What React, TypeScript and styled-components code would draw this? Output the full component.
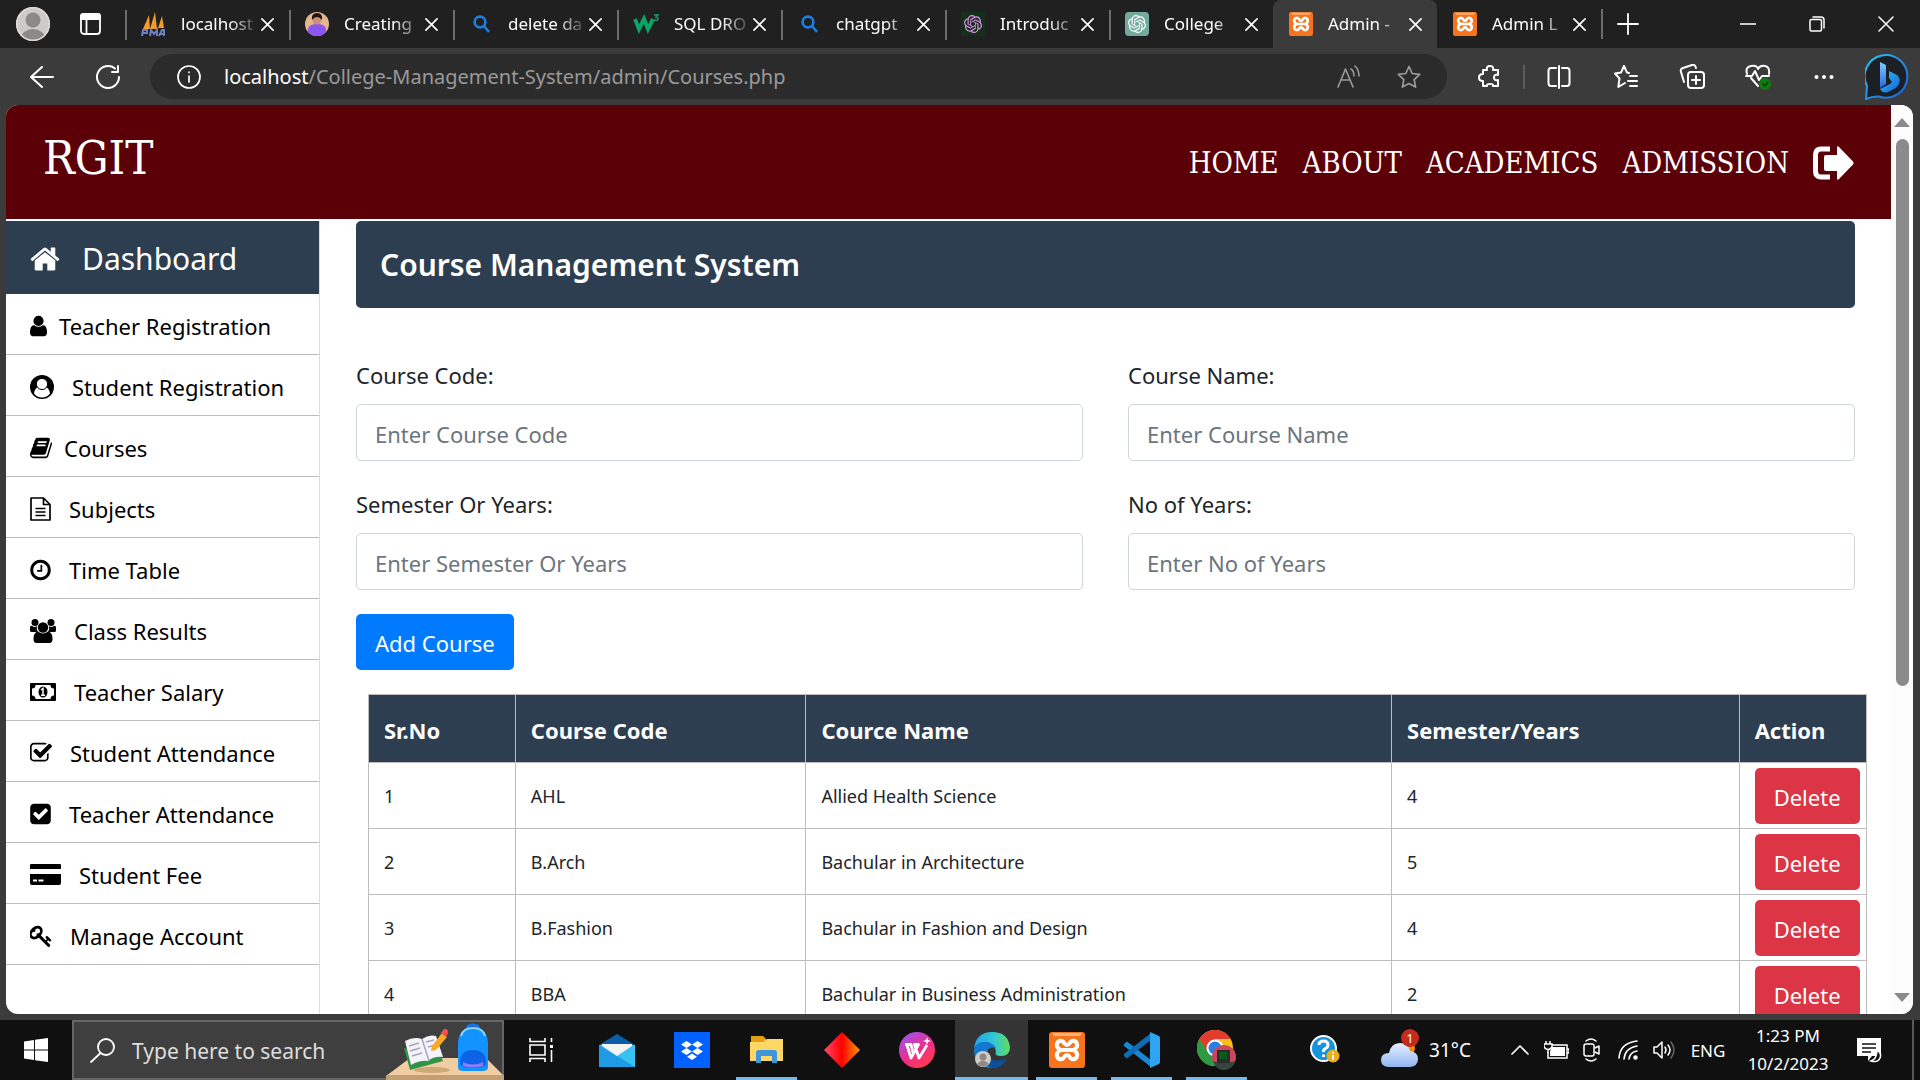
import React from "react";
import styled, { createGlobalStyle, css } from "styled-components";

const SANS = '"Noto Sans", "Open Sans", sans-serif';
const SERIF = '"DejaVu Serif Condensed", "Liberation Serif", serif';
const NAVY = "#2c3e50";

const GlobalStyle = createGlobalStyle`
  *, *::before, *::after { box-sizing: border-box; }
  body { margin: 0; font-family: ${SANS}; background: #3b3b3b; }
  button, input { font-family: inherit; margin: 0; }
  svg { display: block; flex: none; }
`;

const Desktop = styled.div`
  display: flex;
  flex-direction: column;
  height: 100vh;
  overflow: hidden;
  background: #3b3b3b;
`;

const plainButton = css`
  display: flex;
  align-items: center;
  justify-content: center;
  padding: 0;
  border: 0;
  background: none;
  color: #fff;
`;

/* ---------- browser tabs ---------- */

const TabStrip = styled.header`
  display: flex;
  align-items: center;
  height: 48px;
  flex: none;
  background: #202020;
`;

const ProfileArea = styled.div`
  display: flex;
  align-items: center;
  gap: 30px;
  width: 125px;
  padding-left: 16px;
  flex: none;
`;

const IconButton = styled.button<{ $w?: number; $tone?: string }>`
  ${plainButton}
  width: ${(p) => (p.$w ? p.$w + "px" : "auto")};
  flex: none;
  color: ${(p) => p.$tone || "#fff"};
`;

const TabItem = styled.div<{ $active?: boolean; $line?: boolean }>`
  display: flex;
  align-items: center;
  flex: 0 1 164px;
  min-width: 0;
  height: 48px;
  padding: 0 15px 0 16px;
  border-radius: ${(p) => (p.$active ? "8px 8px 0 0" : "0")};
  background: ${(p) =>
    p.$active
      ? "#3b3b3b"
      : p.$line
      ? "linear-gradient(#6b6b6b, #6b6b6b) 0 10px / 2px 30px no-repeat"
      : "none"};
`;

const TabTitle = styled.span`
  flex: 1;
  min-width: 0;
  margin-left: 15px;
  overflow: hidden;
  white-space: nowrap;
  color: #fff;
  font-size: 17px;
  line-height: 24px;
  mask-image: linear-gradient(90deg, #000 60%, transparent 100%);
`;

const NewTab = styled.div`
  display: flex;
  align-items: center;
  height: 30px;
  padding-left: 14px;
  border-left: 2px solid #6b6b6b;
`;

const WindowButtons = styled.div`
  display: flex;
  margin-left: auto;
`;

/* ---------- address bar ---------- */

const Toolbar = styled.div`
  display: flex;
  align-items: center;
  height: 57px;
  flex: none;
  padding: 0 3px 0 9px;
`;

const AddressBox = styled.div`
  display: flex;
  align-items: center;
  flex: 1;
  min-width: 0;
  height: 45px;
  margin: 0 10px 0 9px;
  padding: 0 8px 0 27px;
  border-radius: 23px;
  background: #2b2b2b;
`;

const Address = styled.button`
  ${plainButton}
  flex: 1;
  min-width: 0;
  justify-content: flex-start;
  margin-left: 23px;
  overflow: hidden;
  white-space: nowrap;
  font-size: 20px;
  line-height: 30px;
  color: #9a9a9a;
`;

const Host = styled.span`
  color: #fff;
`;

const BarLine = styled.span`
  width: 2px;
  height: 24px;
  background: #5c5c5c;
`;

/* ---------- page ---------- */

const Viewport = styled.div`
  display: flex;
  flex: 1;
  min-height: 0;
  margin: 0 7px 6px 6px;
  border-radius: 12px;
  overflow: hidden;
  background: #fff;
`;

const Page = styled.div`
  display: flex;
  flex-direction: column;
  flex: 1;
  min-width: 0;
  overflow: hidden;
`;

const Scrollbar = styled.div`
  display: flex;
  flex-direction: column;
  align-items: center;
  width: 22px;
  padding: 13px 0 12px;
  background: #fcfcfc;
`;

const ScrollTrack = styled.div`
  flex: 1;
  width: 13px;
  margin: 12px 0;
`;

const ScrollThumb = styled.div`
  height: 65%;
  border-radius: 7px;
  background: #8b8b8b;
`;

const SiteHeader = styled.header`
  display: flex;
  justify-content: space-between;
  height: 114px;
  flex: none;
  margin-bottom: 2px;
  padding: 0 37px;
  background: #5c0008;
  color: #fff;
  font-family: ${SERIF};
`;

const Brand = styled.a`
  margin-top: 23px;
  font-size: 47px;
  line-height: 60px;
  color: #fff;
  text-decoration: none;
`;

const SiteNav = styled.nav`
  display: flex;
  align-items: center;
  align-self: flex-start;
  gap: 24px;
  height: 116px;
`;

const NavLink = styled.a`
  font-size: 29px;
  line-height: 40px;
  color: #fff;
  text-decoration: none;
`;

const Columns = styled.div`
  display: flex;
  flex: 1;
  min-height: 0;
`;

const Sidebar = styled.nav`
  width: 314px;
  flex: none;
  border-right: 1px solid #dcdcdc;
`;

const SideTitle = styled.a`
  display: flex;
  align-items: center;
  gap: 22px;
  height: 73px;
  padding: 2px 0 0 24px;
  background: ${NAVY};
  color: #fff;
  font-size: 30px;
  line-height: 40px;
  text-decoration: none;
`;

const SideLink = styled.a<{ $tight?: boolean }>`
  display: flex;
  align-items: center;
  gap: ${(p) => (p.$tight ? 12 : 18)}px;
  height: 61px;
  padding: 3px 0 0 24px;
  border-bottom: 1px solid #bdbdbd;
  color: #000;
  font-size: 22px;
  line-height: 32px;
  text-decoration: none;
  white-space: nowrap;
`;

const Content = styled.main`
  flex: 1;
  min-width: 0;
  padding: 0 36px;
  color: #212529;
`;

const Banner = styled.h1`
  margin: 0 0 51px;
  padding: 22px 24px 21px;
  border-radius: 5px;
  background: ${NAVY};
  color: #fff;
  font-size: 30px;
  font-weight: 600;
  line-height: 44px;
`;

const FieldGrid = styled.div`
  display: grid;
  grid-template-columns: 1fr 1fr;
  gap: 27px 45px;
  margin-bottom: 24px;
`;

const Field = styled.div`
  display: flex;
  flex-direction: column;
`;

const Label = styled.label`
  margin-bottom: 13px;
  font-size: 22px;
  line-height: 32px;
`;

const TextBox = styled.input`
  width: 100%;
  height: 57px;
  padding: 3px 18px 0;
  border: 1px solid #ced4da;
  border-radius: 5px;
  background: #fff;
  color: #495057;
  font-size: 22px;
  &::placeholder { color: #6c757d; opacity: 1; }
`;

const ActionButton = styled.button<{ $danger?: boolean }>`
  display: block;
  height: 56px;
  padding: 2px 19px 0;
  border: 0;
  border-radius: 5px;
  background: ${(p) => (p.$danger ? "#dc3545" : "#007bff")};
  color: #fff;
  font-size: 22px;
  line-height: 32px;
  white-space: nowrap;
`;

const CourseTable = styled.table`
  width: 100%;
  margin: 24px 0 0 12px;
  border-collapse: collapse;
  table-layout: fixed;
`;

const HeadCell = styled.th<{ $w: string }>`
  width: ${(p) => p.$w};
  height: 68px;
  padding: 2px 15px 0;
  border: 1px solid #bdbdbd;
  background: ${NAVY};
  color: #fff;
  font-size: 22px;
  font-weight: 700;
  line-height: 32px;
  text-align: left;
`;

const Cell = styled.td`
  height: 66px;
  padding: 0 0 0 15px;
  border: 1px solid #bdbdbd;
  font-size: 18px;
  line-height: 28px;
`;

/* ---------- taskbar ---------- */

const Taskbar = styled.footer`
  display: flex;
  align-items: stretch;
  height: 60px;
  flex: none;
  background: #101010;
  color: #fff;
`;

const SearchBox = styled.label`
  position: relative;
  display: flex;
  align-items: center;
  gap: 17px;
  width: 432px;
  flex: none;
  padding-left: 16px;
  border: 2px solid #666;
  background: #3f3f3f;
`;

const SearchInput = styled.input`
  width: 240px;
  padding: 2px 0 0;
  border: 0;
  background: none;
  color: #fff;
  font-size: 21px;
  line-height: 30px;
  &::placeholder { color: #dedede; opacity: 1; }
`;

const SearchArt = styled.svg`
  position: absolute;
  right: -2px;
  bottom: -2px;
`;

const TaskButton = styled.button<{ $open?: boolean; $active?: boolean }>`
  ${plainButton}
  width: ${(p) => (p.$active ? 73 : 61)}px;
  margin: 0 ${(p) => (p.$active ? 1 : 7)}px;
  flex: none;
  border-top: 3px solid transparent;
  border-bottom: 3px solid ${(p) => (p.$open || p.$active ? "#76b9ed" : "transparent")};
  background: ${(p) => (p.$active ? "#343434" : "none")};
`;

const Tray = styled.div`
  display: flex;
  align-items: center;
  margin-left: auto;
  padding-right: 6px;
  font-size: 17px;
  line-height: 28px;
`;

const TrayItem = styled.button<{ $w: number }>`
  ${plainButton}
  width: ${(p) => p.$w}px;
  height: 60px;
  flex: none;
  font-size: inherit;
`;

const Weather = styled.button`
  ${plainButton}
  gap: 10px;
  width: 152px;
  height: 60px;
  font-size: 19px;
`;

const Clock = styled.button`
  ${plainButton}
  flex-direction: column;
  width: 108px;
  height: 60px;
  font-size: 17px;
  line-height: 28px;
`;

const Badge = styled.span`
  position: absolute;
  top: -3px;
  right: 0;
  width: 18px;
  border-radius: 9px;
  background: #c42b1c;
  color: #fff;
  font-size: 13px;
  line-height: 18px;
  text-align: center;
`;

const WeatherIcon = styled.span`
  position: relative;
  width: 38px;
`;

const ShowDesktop = styled.span`
  width: 2px;
  height: 60px;
  margin-left: 16px;
  background: #5a5a5a;
`;

/* ---------- drawings ---------- */

type StrokeProps = { w: number; h?: number; box?: string; sw?: number; children: React.ReactNode };
const Line = ({ w, h, box, sw = 2, children }: StrokeProps) => (
  <svg width={w} height={h || w} viewBox={box || `0 0 ${w} ${h || w}`} fill="none" stroke="currentColor" strokeWidth={sw} strokeLinecap="round" strokeLinejoin="round" aria-hidden="true">
    {children}
  </svg>
);

const Cross = ({ size = 13 }: { size?: number }) => (
  <Line w={size} box="0 0 14 14" sw={1.8}><path d="M1 1l12 12M13 1L1 13" /></Line>
);

const Xampp = ({ size }: { size: number }) => (
  <svg width={size} height={size} viewBox="0 0 36 36" aria-hidden="true">
    <rect width="36" height="36" rx="3" fill="#f5741d" />
    <path d="M3 1h30l-2 3H5z" fill="#ffb27c" />
    <path d="M13 9c-5-1-7 5-3 8l2 1-2 1c-4 3-2 9 3 8 3-1 2-4 5-4s2 3 5 4c5 1 7-5 3-8l-2-1 2-1c4-3 2-9-3-8-3 1-2 4-5 4s-2-3-5-4z" fill="none" stroke="#fff" strokeWidth="4" strokeLinejoin="round" />
    <path d="M13 18h10" stroke="#fff" strokeWidth="4" />
  </svg>
);

const Knot = ({ bg, fg, round }: { bg: string; fg: string; round: number }) => (
  <svg width="24" height="24" viewBox="0 0 24 24" aria-hidden="true">
    <rect width="24" height="24" rx={round} fill={bg} />
    <g transform="translate(3 3) scale(.75)" fill={fg}>
      <path d="M22.28 9.82a5.98 5.98 0 0 0-.52-4.91 6.05 6.05 0 0 0-6.51-2.9A6.07 6.07 0 0 0 4.98 4.18a5.98 5.98 0 0 0-4 2.9 6.05 6.05 0 0 0 .74 7.1 5.98 5.98 0 0 0 .51 4.91 6.05 6.05 0 0 0 6.52 2.9A5.98 5.98 0 0 0 13.26 24a6.06 6.06 0 0 0 5.77-4.21 5.99 5.99 0 0 0 4-2.9 6.06 6.06 0 0 0-.75-7.07zm-9.02 12.61a4.48 4.48 0 0 1-2.88-1.04l.14-.08 4.78-2.76a.8.8 0 0 0 .39-.68v-6.74l2.02 1.17a.07.07 0 0 1 .04.05v5.58a4.5 4.5 0 0 1-4.49 4.5zM3.6 18.3a4.47 4.47 0 0 1-.54-3.01l.14.08 4.78 2.76a.77.77 0 0 0 .78 0l5.84-3.37v2.33a.08.08 0 0 1-.03.06L9.74 19.95a4.5 4.5 0 0 1-6.14-1.65zM2.34 7.9a4.49 4.49 0 0 1 2.37-1.98V11.6a.77.77 0 0 0 .39.68l5.81 3.35-2.02 1.17a.08.08 0 0 1-.07 0L4 14.01A4.5 4.5 0 0 1 2.34 7.9zm16.6 3.86l-5.84-3.39 2.02-1.16a.08.08 0 0 1 .07 0l4.83 2.79a4.49 4.49 0 0 1-.68 8.1v-5.68a.79.79 0 0 0-.4-.66zm2-3.03l-.14-.08-4.77-2.78a.78.78 0 0 0-.79 0L9.41 9.23V6.9a.07.07 0 0 1 .03-.06l4.83-2.79a4.5 4.5 0 0 1 6.68 4.66zM8.31 12.86l-2.02-1.16a.08.08 0 0 1-.04-.06V6.07a4.5 4.5 0 0 1 7.38-3.45l-.14.08-4.78 2.76a.8.8 0 0 0-.39.68zm1.1-2.37l2.6-1.5 2.6 1.5v3l-2.6 1.5-2.6-1.5z" />
    </g>
  </svg>
);

const Magnifier = () => (
  <svg width="24" height="24" viewBox="0 0 24 24" fill="none" stroke="#1a7fe0" strokeWidth="2.6" aria-hidden="true">
    <circle cx="11" cy="10" r="5.4" /><path d="M15 14l5 6" />
  </svg>
);

const Pma = () => (
  <svg width="25" height="25" viewBox="0 0 25 25" aria-hidden="true">
    <path d="M2 17L8 3l1 14zM9 17L14 0l2 17zM17 16l4-12 2 12z" fill="#f49b29" />
    <path d="M1 24l1-6h4v3H2M9 24l1-6 3 4 3-4v6M18 24l3-6h2v6M19 22h4" fill="none" stroke="#6d7fc4" strokeWidth="2" />
  </svg>
);

const Portrait = () => (
  <svg width="24" height="24" viewBox="0 0 24 24" aria-hidden="true">
    <defs><clipPath id="pc"><circle cx="12" cy="12" r="12" /></clipPath></defs>
    <g clipPath="url(#pc)">
      <rect width="24" height="24" fill="#e6b68e" />
      <path d="M3 24V17q1-5 9-5t9 5v7z" fill="#8a58f0" />
      <circle cx="12" cy="8" r="4.5" fill="#c98f78" />
      <path d="M7 8q-1-7 5-7t5 7q-2-3-5-3T7 8z" fill="#1e1414" />
    </g>
  </svg>
);

const W3 = () => (
  <svg width="26" height="24" viewBox="0 0 26 24" fill="none" stroke="#0aa468" aria-hidden="true">
    <path d="M2 7l4 10 5-10 4 10 5-10" strokeWidth="4" /><path d="M21 3h4l-2 2q2 0 2 2t-4 1" strokeWidth="1.4" />
  </svg>
);

const PersonDisc = () => (
  <svg width="34" height="34" viewBox="0 0 34 34" aria-hidden="true">
    <defs><clipPath id="pd"><circle cx="17" cy="17" r="17" /></clipPath></defs>
    <g clipPath="url(#pd)">
      <rect width="34" height="34" fill="#cdcac7" />
      <circle cx="17" cy="13" r="7.5" fill="#8e8985" />
      <ellipse cx="17" cy="31" rx="12" ry="9" fill="#8e8985" />
    </g>
    <circle cx="17" cy="17" r="16.2" fill="none" stroke="#dedbd8" strokeWidth="1.6" />
  </svg>
);

const Bing = () => (
  <svg width="45" height="46" viewBox="0 0 45 46" aria-hidden="true">
    <defs>
      <linearGradient id="bg1" x1="0" y1="0" x2="1" y2="1"><stop offset="0" stopColor="#28c8f5" /><stop offset="1" stopColor="#1d5bd8" /></linearGradient>
      <linearGradient id="bg2" x1="0" y1="0" x2="0" y2="1"><stop offset="0" stopColor="#7ccbff" /><stop offset="1" stopColor="#2468e0" /></linearGradient>
    </defs>
    <path d="M1 45L2 32A21.300 21.300 0 1 1 14 42.500Q8 42 1 45z" fill="#1c1f24" stroke="url(#bg1)" strokeWidth="2" strokeLinejoin="round" />
    <path d="M15 8l6 3v19l-6 4z" fill="url(#bg2)" />
    <path d="M24 17l8 4q4 3 2 9l-3 4-8 4q-5 2-8-3l10-5 2-2-3-4z" fill="url(#bg1)" />
  </svg>
);

const Fa = ({ x, w, px = 24, d }: { x: number; w: number; px?: number; d: string }) => (
  <svg width={Math.round((w * px) / 1792)} height={px} viewBox={`${x} 0 ${w} 1792`} fill="currentColor" aria-hidden="true"><path d={d} /></svg>
);

const HOME_D = "M1472 992v480q0 26-19 45t-45 19h-384v-384h-256v384h-384q-26 0-45-19t-19-45v-480q0-1 .5-3t.5-3l575-474 575 474q1 2 1 6zm223-69l-62 74q-8 9-21 11h-3q-13 0-21-7l-692-577-692 577q-12 8-24 7-13-2-21-11l-62-74q-8-10-7-23.500t11-21.500l719-599q32-26 76-26t76 26l244 204v-195q0-14 9-23t23-9h192q14 0 23 9t9 23v408l219 182q10 8 11 21.500t-7 23.500z";
const USER_D = "M1536 1399q0 109-62.500 187t-150.500 78h-854q-88 0-150.500-78t-62.500-187q0-85 8.500-160.500t31.500-152 58.500-131 94-89 134.500-34.500q131 128 313 128t313-128q76 0 134.500 34.500t94 89 58.500 131 31.500 152 8.500 160.500zm-256-887q0 159-112.500 271.500t-271.500 112.500-271.500-112.500-112.500-271.500 112.500-271.500 271.500-112.500 271.500 112.500 112.500 271.500z";
const BOOK_D = "M1703 478q40 57 18 129l-275 906q-19 64-76.500 107.500t-122.500 43.500h-923q-77 0-148.500-53.500t-99.500-131.500q-24-67-2-127 0-4 3-27t4-37q1-8-3-21.500t-3-19.500q2-11 8-21t16.500-23.500 16.500-23.500q23-38 45-91.500t30-91.500q3-10 .5-30t-.5-28q3-11 17-28t17-23q21-36 42-92t25-90q1-9-2.500-32t.5-28q4-13 22-30.500t22-22.500q19-26 42.500-84.500t27.500-96.500q1-8-3-25.500t-2-26.500q2-8 9-18t18-23 17-21q8-12 16.500-30.500t15-35 16-36 19.500-32 26.500-23.500 36-11.500 47.500 5.500l-1 3q38-9 51-9h761q74 0 114 56t18 130l-274 906q-36 119-71.500 153.500t-128.500 34.500h-869q-27 0-38 15-11 16-1 43 24 70 144 70h923q29 0 56-15.500t35-41.500l300-987q7-22 5-57 38 15 59 43zm-1064 2q-4 13 2 22.500t20 9.500h608q13 0 25.500-9.500t16.500-22.500l21-64q4-13-2-22.500t-20-9.500h-608q-13 0-25.500 9.500t-16.500 22.500zm-83 256q-4 13 2 22.500t20 9.500h608q13 0 25.500-9.500t16.500-22.500l21-64q4-13-2-22.500t-20-9.500h-608q-13 0-25.500 9.500t-16.500 22.500z";
const CLOCK_D = "M1024 544v448q0 14-9 23t-23 9h-320q-14 0-23-9t-9-23v-64q0-14 9-23t23-9h224v-352q0-14 9-23t23-9h64q14 0 23 9t9 23zm416 352q0-148-73-273t-198-198-273-73-273 73-198 198-73 273 73 273 198 198 273 73 273-73 198-198 73-273zm224 0q0 209-103 385.500t-279.500 279.500-385.500 103-385.500-103-279.500-279.500-103-385.500 103-385.500 279.500-279.500 385.500-103 385.500 103 279.500 279.500 103 385.500z";
const TICK_D = "M813 1299l614-614q19-19 19-45t-19-45l-102-102q-19-19-45-19t-45 19l-467 467-211-211q-19-19-45-19t-45 19l-102 102q-19 19-19 45t19 45l358 358q19 19 45 19t45-19zm851-883v960q0 119-84.500 203.500t-203.500 84.500h-960q-119 0-203.500-84.500t-84.500-203.500v-960q0-119 84.500-203.500t203.500-84.500h960q119 0 203.500 84.500t84.500 203.500z";
const TICK_O_D = "M1472 930v318q0 119-84.500 203.500t-203.500 84.500h-832q-119 0-203.500-84.500t-84.500-203.500v-832q0-119 84.500-203.500t203.500-84.500h832q63 0 117 25 15 7 18 23 3 17-9 29l-49 49q-10 10-23 10-3 0-9-2-23-6-45-6h-832q-66 0-113 47t-47 113v832q0 66 47 113t113 47h832q66 0 113-47t47-113v-254q0-13 9-22l64-64q10-10 23-10 6 0 12 3 20 8 20 29zm231-489l-814 814q-24 24-57 24t-57-24l-430-430q-24-24-24-57t24-57l110-110q24-24 57-24t57 24l263 263 647-647q24-24 57-24t57 24l110 110q24 24 24 57t-24 57z";
const KEY_D = "M832 512q0-80-56-136t-136-56-136 56-56 136q0 42 19 83-41-19-83-19-80 0-136 56t-56 136 56 136 136 56 136-56 56-136q0-42-19-83 41 19 83 19 80 0 136-56t56-136zm851 704q0 17-49 66t-66 49q-9 0-28.500-16t-36.500-33-38.500-40-24.500-26l-96 96 220 220q28 28 28 68 0 42-39 81t-81 39q-40 0-68-28l-671-671q-176 131-365 131-163 0-265.500-102.500t-102.500-265.500q0-160 95-313t248-248 313-95q163 0 265.500 102.500t102.500 265.500q0 189-131 365l355 355 96-96q-3-3-26-24.500t-40-38.500-33-36.500-16-28.500q0-17 49-66t66-49q13 0 23 10 6 6 46 44.500t82 79.500 86.500 86 73 78 28.500 41z";

const menu: { label: string; tight?: boolean; icon: React.ReactNode }[] = [
  { label: "Teacher Registration", tight: true, icon: <Fa x={256} w={1280} d={USER_D} /> },
  {
    label: "Student Registration",
    icon: (
      <svg width="24" height="24" viewBox="0 0 24 24" aria-hidden="true">
        <circle cx="12" cy="12" r="12" fill="#000" />
        <path d="M4 18.500q.6-5 4-6.500 4 3 8 0 3.400 1.500 4 6.500-3 4-8 4t-8-4z" fill="#fff" />
        <circle cx="12" cy="9" r="5.600" fill="#fff" stroke="#000" strokeWidth="1" />
      </svg>
    ),
  },
  { label: "Courses", tight: true, icon: <Fa x={64} w={1664} d={BOOK_D} /> },
  {
    label: "Subjects",
    icon: (
      <svg width="21" height="24" viewBox="0 0 21 24" fill="none" stroke="#000" strokeWidth="1.7" strokeLinejoin="round" aria-hidden="true">
        <path d="M1 1h12.500L20 7.500V23H1zM13.500 1v6.500H20M5.500 11.500h10M5.500 15h10M5.500 18.500h10" />
      </svg>
    ),
  },
  { label: "Time Table", icon: <Fa x={128} w={1536} d={CLOCK_D} /> },
  {
    label: "Class Results",
    icon: (
      <svg width="26" height="24" viewBox="0 0 26 24" aria-hidden="true">
        <circle cx="5" cy="3.500" r="3.500" /><circle cx="21" cy="3.500" r="3.500" />
        <path d="M0 12V9q0-3 2-2 3 2 5 0-1 3 1 6H2q-2 0-2-1zM26 12V9q0-3-2-2-3 2-5 0 1 3-1 6h6q2 0 2-1z" />
        <circle cx="13" cy="8.500" r="5.200" />
        <path d="M3.500 20q0-7 4.500-7.500 5 4 10 0 4.500.5 4.500 7.500 0 4-3 4h-13q-3 0-3-4z" />
      </svg>
    ),
  },
  {
    label: "Teacher Salary",
    icon: (
      <svg width="26" height="18" viewBox="0 0 26 18" aria-hidden="true">
        <rect width="26" height="18" rx="1" />
        <path d="M5.500 2h15q0 3.500 3.500 3.500v7q-3.500 0-3.500 3.500h-15q0-3.500-3.500-3.500v-7q3.500 0 3.500-3.500z" fill="#fff" />
        <ellipse cx="13" cy="9" rx="4.500" ry="5.500" />
        <path d="M11 7l2-1.500V12M11 12.200h4" fill="none" stroke="#fff" strokeWidth="1.500" />
      </svg>
    ),
  },
  { label: "Student Attendance", icon: <Fa x={64} w={1664} d={TICK_O_D} /> },
  { label: "Teacher Attendance", icon: <Fa x={128} w={1536} d={TICK_D} /> },
  {
    label: "Student Fee",
    icon: (
      <svg width="31" height="21" viewBox="0 0 31 21" aria-hidden="true">
        <path d="M1 0h29q1 0 1 1v4H0V1q0-1 1-1zM0 10h31v9q0 2-2 2H2q-2 0-2-2z" />
        <path d="M3 16.500h4M8.500 16.500h5" stroke="#fff" strokeWidth="2" />
      </svg>
    ),
  },
  { label: "Manage Account", icon: <Fa x={64} w={1664} d={KEY_D} /> },
];

const tabs: { title: string; icon: React.ReactNode; active?: boolean; line?: boolean }[] = [
  { title: "localhost", icon: <Pma />, line: true },
  { title: "Creating", icon: <Portrait />, line: true },
  { title: "delete da", icon: <Magnifier />, line: true },
  { title: "SQL DRO", icon: <W3 />, line: true },
  { title: "chatgpt", icon: <Magnifier />, line: true },
  { title: "Introduc", icon: <Knot bg="#14301a" fg="#df8fe8" round={0} />, line: true },
  { title: "College", icon: <Knot bg="#74aa9c" fg="#fff" round={4} />, line: true },
  { title: "Admin -", icon: <Xampp size={24} />, active: true },
  { title: "Admin L", icon: <Xampp size={24} /> },
];

const courses = [
  ["1", "AHL", "Allied Health Science", "4"],
  ["2", "B.Arch", "Bachular in Architecture", "5"],
  ["3", "B.Fashion", "Bachular in Fashion and Design", "4"],
  ["4", "BBA", "Bachular in Business Administration", "2"],
];

const heads: [string, string][] = [
  ["Sr.No", "9.8%"],
  ["Course Code", "19.4%"],
  ["Cource Name", "39.1%"],
  ["Semester/Years", "23.2%"],
  ["Action", "8.5%"],
];

const fields = ["Course Code", "Course Name", "Semester Or Years", "No of Years"];

const apps: { name: string; open?: boolean; active?: boolean; icon: React.ReactNode }[] = [
  {
    name: "Task View",
    icon: (
      <svg width="25" height="24" viewBox="0 0 25 24" fill="none" stroke="#fff" strokeWidth="1.600" aria-hidden="true">
        <path d="M1 0v3.500h15V0M1 7h15v10H1zM1 24v-3.500h15V24M22.500 0v4M22.500 12v12" /><path d="M21 7h3v3h-3z" fill="#fff" stroke="none" />
      </svg>
    ),
  },
  {
    name: "Mail",
    icon: (
      <svg width="36" height="33" viewBox="0 0 36 33" aria-hidden="true">
        <path d="M0 11L18 0l18 11v4H0z" fill="#0a5ea8" />
        <path d="M0 11h36v22H0z" fill="#38c1f3" /><path d="M0 11l36 22H0z" fill="#1e9be4" />
        <path d="M3 10h30v2L18 22 3 12z" fill="#f3f3f3" />
      </svg>
    ),
  },
  {
    name: "Dropbox",
    icon: (
      <svg width="36" height="36" viewBox="0 0 36 36" aria-hidden="true">
        <rect width="36" height="36" fill="#0061fe" />
        <path d="M12.500 9l5.500 3.500-5.500 3.500L7 12.500zM23.500 9l5.500 3.500-5.500 3.500-5.500-3.500zM12.500 16l5.500 3.500-5.500 3.500L7 19.500zM23.500 16l5.500 3.500-5.500 3.500-5.500-3.500zM18 21.500l5 3.200-5 3.300-5-3.300z" fill="#fff" />
      </svg>
    ),
  },
  {
    name: "File Explorer",
    open: true,
    icon: (
      <svg width="33" height="30" viewBox="0 0 33 30" aria-hidden="true">
        <path d="M1 1h12l3 3v5H1z" fill="#e0a010" /><path d="M0 7h13l4-3h16v22H0z" fill="#ffd766" />
        <path d="M6 28V18q0-3 3-3h15q3 0 3 3v10h-5v-7H11v7z" fill="#3b96dd" />
      </svg>
    ),
  },
  {
    name: "Diamond",
    icon: (
      <svg width="36" height="36" viewBox="0 0 36 36" aria-hidden="true">
        <defs><linearGradient id="dm"><stop offset="0" stopColor="#ff4a6a" /><stop offset=".5" stopColor="#f00" /><stop offset="1" stopColor="#ff9a00" /></linearGradient></defs>
        <path d="M18 0l18 18-18 18L0 18z" fill="url(#dm)" />
      </svg>
    ),
  },
  {
    name: "WPS",
    icon: (
      <svg width="36" height="36" viewBox="0 0 36 36" aria-hidden="true">
        <defs><linearGradient id="wp" x1="0" y1="0" x2=".7" y2="1"><stop offset="0" stopColor="#8a5cff" /><stop offset=".6" stopColor="#f02c8c" /><stop offset="1" stopColor="#ff3d4a" /></linearGradient></defs>
        <circle cx="18" cy="18" r="18" fill="url(#wp)" />
        <path d="M6 12.500h6l2.500 10M8 13l4 13 7.500-13.500h-4L20 26l8-13" fill="none" stroke="#fff" strokeWidth="2.800" strokeLinejoin="round" />
        <path d="M28 5l1 3 3 1-3 1-1 3-1-3-3-1 3-1z" fill="#fff" />
      </svg>
    ),
  },
  {
    name: "Edge",
    active: true,
    icon: (
      <svg width="36" height="36" viewBox="0 0 36 36" aria-hidden="true">
        <defs>
          <linearGradient id="e1"><stop offset="0" stopColor="#1fa5ea" /><stop offset=".55" stopColor="#33c6d8" /><stop offset="1" stopColor="#5ee05a" /></linearGradient>
        </defs>
        <path d="M0 17Q2 0 18 0t18 15q0 9-9 9-7 0-5-4 0-6-8-9Q4 9 0 17z" fill="url(#e1)" />
        <path d="M0 17q4-9 14-7 6 2 8 6-9-2-9 6 1 11 18 7-6 7-13 7Q0 36 0 17z" fill="#1478d0" />
        <path d="M13 20q0 12 20 7-5 9-15 9-11-4-5-16z" fill="#0c4f9c" />
        <circle cx="9" cy="27" r="8" fill="#d0ccc8" /><circle cx="9" cy="25" r="3.500" fill="#8e8985" /><path d="M3 32q6-7 12 0-6 5-12 0z" fill="#8e8985" />
      </svg>
    ),
  },
  { name: "XAMPP", open: true, icon: <Xampp size={36} /> },
  {
    name: "Visual Studio Code",
    open: true,
    icon: (
      <svg width="36" height="36" viewBox="0 0 36 36" aria-hidden="true">
        <path d="M3 9.500L27 28v7L0 14v-2z" fill="#1b86d6" /><path d="M3 26.500L27 8V1L0 22v2z" fill="#0f6cb5" /><path d="M26 0l9 4q1 1 1 2v24q0 1-1 2l-9 4z" fill="#2fa5f2" />
      </svg>
    ),
  },
  {
    name: "Chrome",
    open: true,
    icon: (
      <svg width="40" height="40" viewBox="0 0 40 40" aria-hidden="true">
        <circle cx="18" cy="18" r="18" fill="#fbc116" />
        <path d="M2.400 9A18 18 0 0 0 18 36l6-14-6-4z" fill="#2c9a47" /><path d="M2.400 9L11 22 18 9h15.600A18 18 0 0 0 2.400 9z" fill="#e33b2e" />
        <circle cx="18" cy="18" r="8.500" fill="#fff" /><circle cx="18" cy="18" r="6.500" fill="#2a7de1" />
        <circle cx="27" cy="27" r="12" fill="#c9485c" /><path d="M16 31q11 4 22 0-3 9-11 9t-11-9z" fill="#34463f" /><path d="M20 20h13v13H20z" fill="#2b2a2c" /><path d="M22 22h8v7h-8z" fill="#0c5a1a" />
      </svg>
    ),
  },
];

const SearchPicture = () => (
  <SearchArt width="118" height="60" viewBox="0 0 118 60" aria-hidden="true">
    <path d="M0 56L24 38h76l18 18v4H0z" fill="#f0cda3" /><path d="M0 55h118v5H0z" fill="#c49f74" />
    <ellipse cx="46" cy="50" rx="18" ry="3" fill="#cfa878" />
    <path d="M18 28l6 22 33-9-2-5z" fill="#2f9448" /><path d="M19 21q9-5 17-2 7-5 14-3l7 21q-9-1-15 4-8-1-17 4z" fill="#f4f3fa" />
    <path d="M36 19l7 22M23 26l10-3M24 31l10-3M26 36l10-3M40 22l8-2M42 27l8-2" stroke="#a9a5bf" strokeWidth="1.500" fill="none" />
    <path d="M46 26l10-13 5 4-11 13-5 1z" fill="#f9a825" /><path d="M55 13l3-4q4-1 4 4l-2 4z" fill="#f0524a" />
    <path d="M81 10q0-5 6-5t6 5" fill="none" stroke="#1676f0" strokeWidth="3" />
    <path d="M72 24q0-16 15-16t15 16v23q0 4-5 4H77q-5 0-5-4z" fill="#1293ff" /><path d="M75 16q2-8 12-8t12 8" fill="none" stroke="#8bd6ff" strokeWidth="2" />
    <path d="M74 41q1-11 13-11t13 11v3q-2 4-13 4t-13-4z" fill="#0d63e8" /><path d="M77 42q10 5 20 0v4q-10 3-20 0z" fill="#8e7bff" />
  </SearchArt>
);

export default function App() {
  return (
    <Desktop>
      <GlobalStyle />
      <TabStrip>
        <ProfileArea>
          <IconButton aria-label="Profile"><PersonDisc /></IconButton>
          <IconButton aria-label="Tab actions">
            <svg width="21" height="22" viewBox="0 0 21 22" fill="none" stroke="#fff" strokeWidth="1.800" aria-hidden="true">
              <rect x="1" y="1" width="19" height="20" rx="3" /><path d="M1 3q0-2 2-2h15q2 0 2 2v3H1z" fill="#fff" /><path d="M6.500 6v15" />
            </svg>
          </IconButton>
        </ProfileArea>
        {tabs.map((t, i) => (
          <TabItem key={i} $active={t.active} $line={t.line}>
            {t.icon}
            <TabTitle>{t.title}</TabTitle>
            <IconButton aria-label={"Close " + t.title}><Cross /></IconButton>
          </TabItem>
        ))}
        <NewTab>
          <IconButton aria-label="New tab"><Line w={22} sw={1.8}><path d="M11 1v20M1 11h20" /></Line></IconButton>
        </NewTab>
        <WindowButtons>
          <IconButton $w={69} aria-label="Minimize"><Line w={16} sw={1.5}><path d="M0 8h16" /></Line></IconButton>
          <IconButton $w={69} aria-label="Restore"><Line w={16} sw={1.5}><rect x="1" y="3.500" width="11.500" height="11.500" rx="1.500" /><path d="M4 1h8q3 0 3 3v8" /></Line></IconButton>
          <IconButton $w={69} aria-label="Close window"><Line w={16} sw={1.5}><path d="M1 1l14 14M15 1L1 15" /></Line></IconButton>
        </WindowButtons>
      </TabStrip>

      <Toolbar>
        <IconButton $w={66} aria-label="Back"><Line w={24}><path d="M23 12H1M12 2L1 12l11 10" /></Line></IconButton>
        <IconButton $w={66} aria-label="Refresh"><Line w={24}><path d="M23 12a11 11 0 1 1-4-8.500M22 1v6h-6" /></Line></IconButton>
        <AddressBox>
          <IconButton aria-label="Site information"><Line w={24} sw={1.7}><circle cx="12" cy="12" r="11" /><path d="M12 11v6M12 7v.4" /></Line></IconButton>
          <Address aria-label="Address"><Host>localhost</Host>/College-Management-System/admin/Courses.php</Address>
          <IconButton $w={60} $tone="#9a9a9a" aria-label="Read aloud"><Line w={24} sw={1.6}><path d="M1 22L8.500 4 16 22M4 15h9M14 4q3 2 3 7M18 1q4 4 4 10" /></Line></IconButton>
          <IconButton $w={60} $tone="#9a9a9a" aria-label="Favorite"><Line w={24} sw={1.7}><path d="M12 1.500l3.200 7 7.500.9-5.500 5.200 1.400 7.500L12 18.500l-6.600 3.600 1.400-7.500L1.300 9.400l7.500-.9z" /></Line></IconButton>
        </AddressBox>
        <IconButton $w={66} aria-label="Extensions"><Line w={24}><path d="M5 5h4q-1-4 3-4t3 4h5v5q-4-1-4 2.500t4 2.500v6h-5q1-2-3-2t-3 2H5v-5q-4 0-4-3.500T5 9z" /></Line></IconButton>
        <BarLine />
        <IconButton $w={68} aria-label="Split screen"><Line w={24}><path d="M9 3H4Q1.500 3 1.500 6v12q0 3 2.500 3h5M15 3h5q2.500 0 2.500 3v12q0 3-2.500 3h-5M12 1v22" /></Line></IconButton>
        <IconButton $w={66} aria-label="Favorites"><Line w={24}><path d="M15 8l-2-.4L10 1 7 7.600 1 8.500l4.500 5L4.300 22 11 18M16 11h7M14 16h9M16 21h7" /></Line></IconButton>
        <IconButton $w={66} aria-label="Collections"><Line w={26} h={26}><rect x="9" y="8" width="16" height="16" rx="3" /><path d="M17 12v8M13 16h8M5 18L2 8q-1-3 2-4l9-3q3-1 4 3" /></Line></IconButton>
        <IconButton $w={66} aria-label="Browser essentials">
          <Line w={26} h={26}><path d="M2 10Q0 3 6 2t7 3q2-4 7-3t4 8M13 22l-7-8M1 12h6l3-5 4 9 3-4h7" /><circle cx="20" cy="20" r="5" fill="#107c10" stroke="#107c10" /><path d="M18 20l2 2 3-4" stroke="#0a3d0a" strokeWidth="1.500" /></Line>
        </IconButton>
        <IconButton $w={66} aria-label="Settings"><svg width="20" height="6" viewBox="0 0 20 6" fill="#fff" aria-hidden="true"><circle cx="2.500" cy="3" r="2" /><circle cx="10" cy="3" r="2" /><circle cx="17.500" cy="3" r="2" /></svg></IconButton>
        <IconButton $w={60} aria-label="Bing"><Bing /></IconButton>
      </Toolbar>

      <Viewport>
        <Page>
          <SiteHeader>
            <Brand href="#">RGIT</Brand>
            <SiteNav>
              {["HOME", "ABOUT", "ACADEMICS", "ADMISSION"].map((n) => <NavLink key={n} href="#">{n}</NavLink>)}
              <NavLink href="#" aria-label="Sign out">
                <svg width="41" height="34" viewBox="0 0 41 34" aria-hidden="true">
                  <path d="M17 3H8Q2.500 3 2.500 9v16q0 6 5.500 6h9" fill="none" stroke="#fff" strokeWidth="5" />
                  <path d="M24 1.500q0-2 2-.5l14 14.500q1 1.500 0 3L26 33q-2 1.500-2-.5V25H13q-2 0-2-2V11q0-2 2-2h11z" fill="#fff" />
                </svg>
              </NavLink>
            </SiteNav>
          </SiteHeader>
          <Columns>
            <Sidebar>
              <SideTitle href="#"><Fa x={64} w={1664} px={32} d={HOME_D} />Dashboard</SideTitle>
              {menu.map((m) => <SideLink key={m.label} href="#" $tight={m.tight}>{m.icon}{m.label}</SideLink>)}
            </Sidebar>
            <Content>
              <Banner>Course Management System</Banner>
              <form onSubmit={(e) => e.preventDefault()}>
                <FieldGrid>
                  {fields.map((f, i) => (
                    <Field key={f}>
                      <Label htmlFor={"field-" + i}>{f}:</Label>
                      <TextBox id={"field-" + i} type="text" placeholder={"Enter " + f} />
                    </Field>
                  ))}
                </FieldGrid>
                <ActionButton type="submit">Add Course</ActionButton>
              </form>
              <CourseTable>
                <thead><tr>{heads.map(([h, w]) => <HeadCell key={h} $w={w} scope="col">{h}</HeadCell>)}</tr></thead>
                <tbody>
                  {courses.map((row) => (
                    <tr key={row[0]}>
                      {row.map((c, i) => <Cell key={i}>{c}</Cell>)}
                      <Cell><ActionButton $danger type="button">Delete</ActionButton></Cell>
                    </tr>
                  ))}
                </tbody>
              </CourseTable>
            </Content>
          </Columns>
        </Page>
        <Scrollbar aria-hidden="true">
          <svg width="16" height="9" viewBox="0 0 16 9" fill="#8b8b8b"><path d="M8 0l8 9H0z" /></svg>
          <ScrollTrack><ScrollThumb /></ScrollTrack>
          <svg width="16" height="9" viewBox="0 0 16 9" fill="#8b8b8b"><path d="M8 9L0 0h16z" /></svg>
        </Scrollbar>
      </Viewport>

      <Taskbar>
        <TrayItem $w={72} aria-label="Start">
          <svg width="24" height="24" viewBox="0 0 24 24" fill="#fff" aria-hidden="true"><path d="M0 3.500L10 2v9.500H0zM11 1.800L24 0v11.500H11zM0 12.500h10V22L0 20.500zM11 12.500h13V24l-13-1.800z" /></svg>
        </TrayItem>
        <SearchBox>
          <Line w={25} sw={1.8}><circle cx="16" cy="9" r="8" /><path d="M10.500 15L1 24" /></Line>
          <SearchInput type="text" placeholder="Type here to search" aria-label="Search" />
          <SearchPicture />
        </SearchBox>
        {apps.map((a) => (
          <TaskButton key={a.name} aria-label={a.name} $open={a.open} $active={a.active}>{a.icon}</TaskButton>
        ))}
        <Tray>
          <TrayItem $w={50} aria-label="Help">
            <svg width="30" height="30" viewBox="0 0 30 30" aria-hidden="true">
              <circle cx="13.500" cy="13.500" r="12.500" fill="#1593dc" stroke="#fff" strokeWidth="2" />
              <path d="M9 10q0-4 4.500-4t4.500 4q0 2-2.500 3.500t-2 3.500M13.500 19.500v2.500" fill="none" stroke="#fff" strokeWidth="3" />
              <circle cx="23" cy="21" r="6.500" fill="#f0ad1b" /><path d="M23 20v5M23 17v1.500" stroke="#fff" strokeWidth="2" />
            </svg>
          </TrayItem>
          <Weather aria-label="Weather 31°C">
            <WeatherIcon>
              <svg width="38" height="36" viewBox="0 0 38 36" aria-hidden="true">
                <defs><linearGradient id="cl" x1="0" y1="0" x2="0" y2="1"><stop offset="0" stopColor="#e8f0ff" /><stop offset="1" stopColor="#8fb4f0" /></linearGradient></defs>
                <circle cx="27" cy="16" r="7" fill="#f08a1c" />
                <path d="M8 35q-8 0-8-7t8-7q2-10 11-10 8 0 10 8 8 1 8 8t-8 8z" fill="url(#cl)" />
              </svg>
              <Badge>1</Badge>
            </WeatherIcon>
            31°C
          </Weather>
          <TrayItem $w={36} aria-label="Show hidden icons"><Line w={18} h={10} sw={1.7}><path d="M1 9l8-8 8 8" /></Line></TrayItem>
          <TrayItem $w={36} aria-label="Battery">
            <svg width="25" height="18" viewBox="0 0 25 18" aria-hidden="true"><path d="M6 4h17v13H4v-6M23 8h2v4h-2" fill="none" stroke="#fff" strokeWidth="1.500" /><path d="M8 6h13v9H6v-5z" fill="#fff" /><path d="M2 0v3M6 0v3M0 3h8v3q-4 5-8 0zM4 8v4" fill="#101010" stroke="#fff" strokeWidth="1.500" /></svg>
          </TrayItem>
          <TrayItem $w={36} aria-label="Meet now"><Line w={18} h={24} sw={1.5}><rect x="1" y="6" width="10" height="12" rx="2" /><path d="M12 10l4-2v8l-4-2M3 3q5-4 10 0M3 21q5 4 10 0" /></Line></TrayItem>
          <TrayItem $w={36} aria-label="Network"><Line w={20} sw={1.6}><path d="M1 18Q2 3 19 1M6 19Q7 8 19 6M11 19q1-7 8-8" /><circle cx="17.500" cy="17.500" r="1.500" fill="#fff" /></Line></TrayItem>
          <TrayItem $w={36} aria-label="Volume"><Line w={22} h={20} sw={1.5}><path d="M1 7h3l5-5v16l-5-5H1zM12 7q2 3 0 6M15 5q4 5 0 10" /><path d="M18 2q6 8 0 16" stroke="#666" /></Line></TrayItem>
          <TrayItem $w={52} aria-label="Language">ENG</TrayItem>
          <Clock aria-label="Clock"><span>1:23 PM</span><span>10/2/2023</span></Clock>
          <TrayItem $w={54} aria-label="Notifications">
            <svg width="25" height="25" viewBox="0 0 25 25" aria-hidden="true"><path d="M0 0h24v18h-9l-4 5v-5H0z" fill="#fff" /><path d="M5 6h14M5 10h14M5 14h9" stroke="#101010" strokeWidth="1.500" /><path d="M20 12q5 3 3 8t-9 3q6-2 6-11z" fill="#101010" stroke="#fff" strokeWidth="1.500" /></svg>
          </TrayItem>
          <ShowDesktop />
        </Tray>
      </Taskbar>
    </Desktop>
  );
}
